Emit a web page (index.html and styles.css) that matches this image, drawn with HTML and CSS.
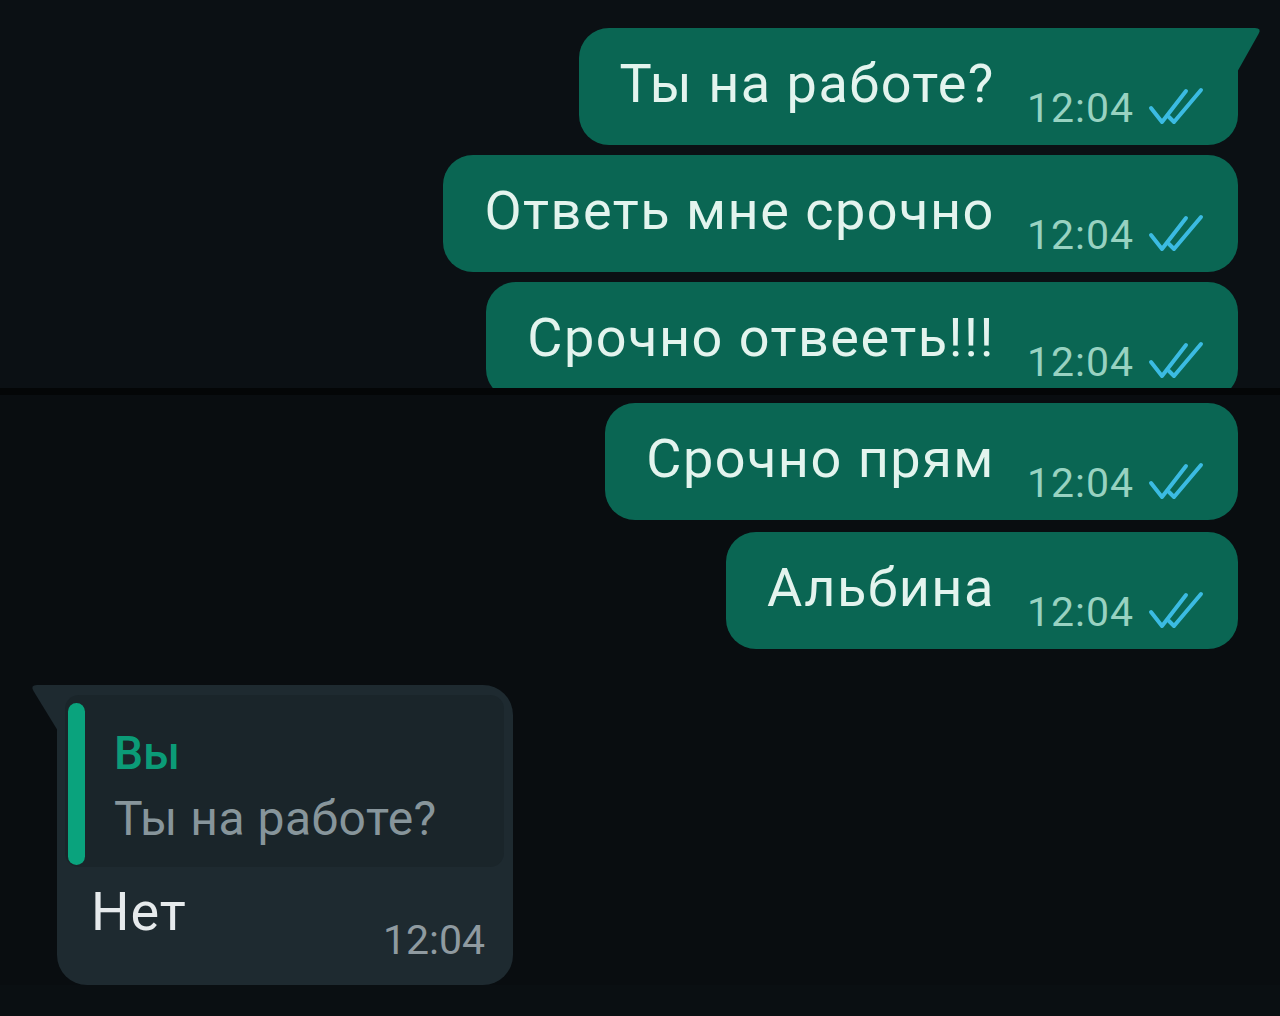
FILE: index.html
```html
<!DOCTYPE html>
<html lang="ru">
<head>
<meta charset="utf-8">
<title>Чат</title>
<link rel="stylesheet" href="styles.css">
</head>
<body>
<div class="chat">
  <section class="shot shot-top">
    <div class="bubble out first">
      <svg class="tail-out" width="26" height="46" viewBox="0 0 26 46"><path d="M0 0 H19 Q26 0 22.5 6 L0 46 Z"/></svg>
      <span class="text">Ты на работе?</span>
      <span class="meta"><span class="time">12:04</span><svg class="ticks" width="60" height="38" viewBox="0 0 60 38"><path d="M3 21 L14 35 L38 4"/><path d="M21 30 L26 35 L53 3"/></svg></span>
    </div>
    <div class="bubble out">
      <span class="text">Ответь мне срочно</span>
      <span class="meta"><span class="time">12:04</span><svg class="ticks" width="60" height="38" viewBox="0 0 60 38"><path d="M3 21 L14 35 L38 4"/><path d="M21 30 L26 35 L53 3"/></svg></span>
    </div>
    <div class="bubble out">
      <span class="text">Срочно отвееть!!!</span>
      <span class="meta"><span class="time">12:04</span><svg class="ticks" width="60" height="38" viewBox="0 0 60 38"><path d="M3 21 L14 35 L38 4"/><path d="M21 30 L26 35 L53 3"/></svg></span>
    </div>
  </section>
  <div class="seam"></div>
  <section class="shot shot-bottom">
    <div class="bubble out">
      <span class="text">Срочно прям</span>
      <span class="meta"><span class="time">12:04</span><svg class="ticks" width="60" height="38" viewBox="0 0 60 38"><path d="M3 21 L14 35 L38 4"/><path d="M21 30 L26 35 L53 3"/></svg></span>
    </div>
    <div class="bubble out">
      <span class="text">Альбина</span>
      <span class="meta"><span class="time">12:04</span><svg class="ticks" width="60" height="38" viewBox="0 0 60 38"><path d="M3 21 L14 35 L38 4"/><path d="M21 30 L26 35 L53 3"/></svg></span>
    </div>
    <div class="bubble in">
      <svg class="tail-in" width="28" height="46" viewBox="0 0 28 46"><path d="M28 0 H7 Q0 0 3.5 6 L28 46 Z"/></svg>
      <div class="quote">
        <div class="bar"></div>
        <div class="qbody">
          <span class="qname">Вы</span>
          <span class="qtext">Ты на работе?</span>
        </div>
      </div>
      <div class="reply">
        <span class="rtext">Нет</span>
        <span class="rtime">12:04</span>
      </div>
    </div>
  </section>
</div>
</body>
</html>
```

FILE: styles.css
```css
html, body {
  margin: 0;
  padding: 0;
  background: #0a0f12;
}
body {
  font-family: Roboto, "Noto Sans", "DejaVu Sans", sans-serif;
  width: 1280px;
  height: 1016px;
  overflow: hidden;
}
.chat {
  display: flex;
  flex-direction: column;
}
.shot {
  display: flex;
  flex-direction: column;
  align-items: flex-end;
  padding-right: 42px;
}
.shot-top {
  height: 388px;
  overflow: hidden;
  padding-top: 28px;
  gap: 10px;
  box-sizing: border-box;
  background: #0b1014;
}
.seam {
  height: 7px;
  background: #040607;
}
.shot-bottom {
  padding-top: 8px;
  gap: 12px;
  background: #090d10;
  flex: 1;
  height: 621px;
  box-sizing: border-box;
}
.bubble {
  position: relative;
  box-sizing: border-box;
}
.out {
  background: #0a6653;
  height: 117px;
  border-radius: 30px;
  display: flex;
  align-items: flex-start;
  padding: 0 30px 0 41px;
  flex-shrink: 0;
}
.out.first {
  border-top-right-radius: 0;
}
.tail-out {
  position: absolute;
  top: 0;
  right: -24px;
  fill: #0a6653;
}
.text {
  font-size: 54px;
  line-height: 54px;
  letter-spacing: 1.5px;
  color: #e3f4ee;
  margin-top: 29px;
  white-space: nowrap;
}
.meta {
  display: flex;
  align-items: flex-start;
  margin-left: 32px;
  margin-top: 60px;
}
.time {
  font-size: 41px;
  line-height: 41px;
  letter-spacing: 1px;
  color: #98d2c1;
}
.ticks {
  margin-left: 14px;
  margin-top: -1px;
  fill: none;
  stroke: #3bbbe2;
  stroke-width: 4;
  stroke-linecap: round;
  stroke-linejoin: round;
}
.in {
  align-self: flex-start;
  margin-left: 57px;
  margin-top: 24px;
  width: 456px;
  height: 300px;
  background: #1e2a30;
  border-radius: 0 30px 30px 30px;
  padding: 10px 9px 0 8px;
  display: flex;
  flex-direction: column;
}
.tail-in {
  position: absolute;
  top: 0;
  left: -27px;
  fill: #1e2a30;
}
.quote {
  display: flex;
  height: 172px;
  background: #1a252a;
  border-radius: 14px;
}
.bar {
  width: 17px;
  margin: 8px 0 2px 3px;
  background: #0aa37d;
  border-radius: 9px;
  flex-shrink: 0;
}
.qbody {
  display: flex;
  flex-direction: column;
  padding-left: 29px;
}
.qname {
  font-size: 46px;
  line-height: 46px;
  font-weight: 500;
  color: #0b9b77;
  margin-top: 35px;
}
.qtext {
  font-size: 48px;
  line-height: 48px;
  letter-spacing: 0.5px;
  color: #87959b;
  margin-top: 19px;
}
.reply {
  display: flex;
  justify-content: space-between;
  align-items: flex-start;
  padding: 0 19px 0 26px;
}
.rtext {
  font-size: 54px;
  line-height: 54px;
  letter-spacing: 1px;
  color: #e6eaec;
  margin-top: 18px;
}
.rtime {
  font-size: 41px;
  line-height: 41px;
  color: #8f9aa0;
  margin-top: 53px;
}
```
